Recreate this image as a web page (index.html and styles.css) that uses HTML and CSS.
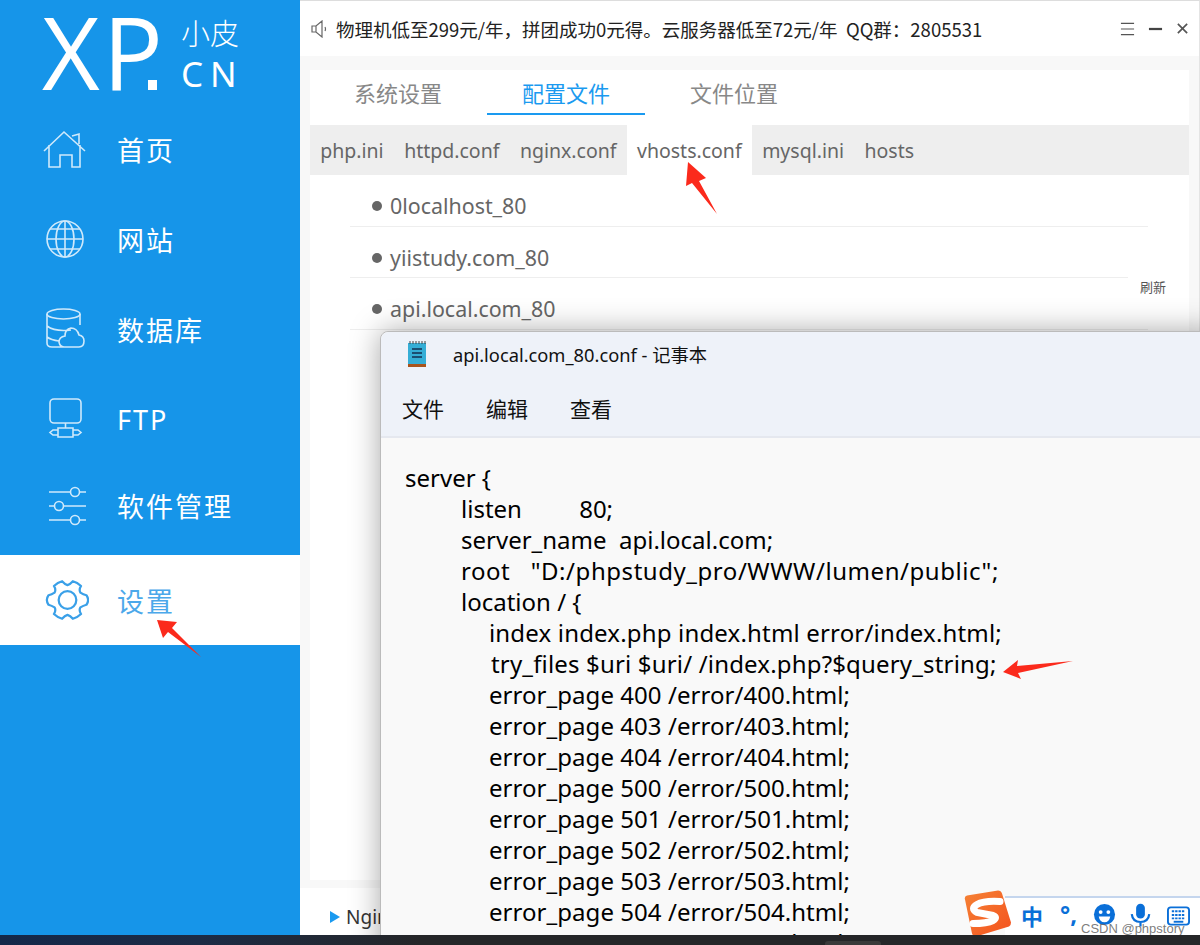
FILE: index.html
```html
<!DOCTYPE html>
<html lang="zh-CN">
<head>
<meta charset="utf-8">
<title>小皮面板</title>
<link rel="stylesheet" href="styles.css">
</head>
<body>
<div class="app">
  <aside class="sidebar">
    <div class="logo">
      <span class="logo-xp">XP<i class="logo-dot"></i></span>
      <span class="logo-sub"><span class="logo-cn">小皮</span><span class="logo-en">CN</span></span>
    </div>
    <nav class="nav">
      <a class="nav-item">
        <svg class="nav-icon" viewBox="0 0 46 46"><path d="M1 25 L21 6 L42 25 M29 10 L36 8 V18 M6 19 V41 H17 V29 H29 V41 H37 V19"/></svg>
        <span>首页</span>
      </a>
      <a class="nav-item">
        <svg class="nav-icon" viewBox="0 0 46 46"><circle cx="22" cy="23" r="18"/><ellipse cx="22" cy="23" rx="9" ry="18"/><path d="M22 5V41M4 23H40M7 13H37M7 33H37"/></svg>
        <span>网站</span>
      </a>
      <a class="nav-item">
        <svg class="nav-icon" viewBox="0 0 46 46"><ellipse cx="20.500" cy="8" rx="16.500" ry="5"/><path d="M4 8V37Q4 41 9 41H19M37 8V19M4 20Q12 26 28 24M4 31Q8 34 16 35M21 41H36Q41 41 41 35Q41 30 36 29Q34 22 28 22Q22 23 22 30Q16 31 16 36Q17 41 21 41Z"/></svg>
        <span>数据库</span>
      </a>
      <a class="nav-item">
        <svg class="nav-icon" viewBox="0 0 46 46"><rect x="7" y="3" width="31" height="24" rx="4"/><path d="M22.500 27V32M15 32H30V41H15ZM15 34H10L7 36.500L10 39H15M30 34H35L38 36.500L35 39H30"/></svg>
        <span>FTP</span>
      </a>
      <a class="nav-item is-raised">
        <svg class="nav-icon" viewBox="0 0 46 46"><circle cx="32" cy="10" r="4.500"/><circle cx="16" cy="24" r="4.500"/><circle cx="32" cy="38" r="4.500"/><path d="M6 10H27M37 10H43M6 24H11M21 24H43M6 38H27M37 38H43"/></svg>
        <span>软件管理</span>
      </a>
      <a class="nav-item is-active">
        <svg class="nav-icon" viewBox="-3.350 -1.750 49.500 49.500"><path d="M36.900 15Q40 17 43.400 17.900Q47 23 43.400 28.100Q40 29 36.900 31Q35 34 37.600 38.100Q33.500 42 28.800 43.200Q26 40 23 39Q20 40 17.200 43.200Q12.500 42 8.400 38.100Q11 34 9.100 31Q6 29 2.600 28.100Q-1 23 2.600 17.900Q6 17 9.100 15Q11 12 8.400 7.900Q12.500 4 17.200 2.800Q20 6 23 7Q26 6 28.800 2.800Q33.500 4 37.600 7.900Q35 12 36.900 15Z" stroke-linejoin="round"/><circle cx="23" cy="23" r="9.500"/></svg>
        <span>设置</span>
      </a>
    </nav>
  </aside>

  <main class="main">
    <header class="topbar">
      <svg class="speaker" viewBox="0 0 16 18"><path d="M1 6H5L11 1V17L5 12H1Z M5 6V12 M14 7Q15 9 14 11"/></svg>
      <span class="notice">物理机低至299元/年，拼团成功0元得。云服务器低至72元/年&nbsp;&nbsp;QQ群：2805531</span>
      <div class="window-buttons">
        <svg class="win-btn" viewBox="0 0 16 14"><path d="M1 1H15M1 7H15M1 13H15"/></svg>
        <svg class="win-btn win-min" viewBox="0 0 16 14"><path d="M1 7H15"/></svg>
        <svg class="win-btn win-close" viewBox="0 0 14 14"><path d="M2 2L12 12M12 2L2 12"/></svg>
      </div>
    </header>

    <section class="content">
      <div class="card">
        <div class="tabs">
          <span class="tab">系统设置</span>
          <span class="tab is-active">配置文件</span>
          <span class="tab">文件位置</span>
        </div>
        <div class="subtabs">
          <span class="subtab">php.ini</span>
          <span class="subtab">httpd.conf</span>
          <span class="subtab">nginx.conf</span>
          <span class="subtab is-active">vhosts.conf</span>
          <span class="subtab">mysql.ini</span>
          <span class="subtab">hosts</span>
        </div>
        <ul class="hosts">
          <li class="host">0localhost_80</li>
          <li class="host">yiistudy.com_80</li>
          <li class="host">api.local.com_80</li>
        </ul>
        <span class="refresh">刷新</span>
      </div>
    </section>

    <footer class="status">
      <span class="status-arrow"></span>
      <span class="status-text">Nginx</span>
    </footer>
  </main>

  <section class="notepad">
    <div class="np-title">
      <svg class="np-icon" viewBox="0 0 20 26">
        <rect x="1" y="2" width="18" height="21" fill="#35aed6"/>
        <rect x="1" y="23" width="18" height="3" fill="#a8541c"/>
        <path d="M3 0V3M6 0V3M9 0V3M12 0V3M15 0V3M18 0V3" stroke="#444" stroke-width="1"/>
        <path d="M5 8H15M5 12H15M5 16H15" stroke="#1b4f72" stroke-width="2"/>
      </svg>
      <span class="np-name">api.local.com_80.conf - 记事本</span>
    </div>
    <div class="np-menu">
      <span class="np-menu-item">文件</span>
      <span class="np-menu-item">编辑</span>
      <span class="np-menu-item">查看</span>
    </div>
    <div class="np-body">
      <div class="ln">server {</div>
      <div class="ln i1">listen <span class="tab-80">80;</span></div>
      <div class="ln i1">server_name&nbsp; api.local.com;</div>
      <div class="ln i1 ls-wide">root&nbsp;&nbsp; "D:/phpstudy_pro/WWW/lumen/public";</div>
      <div class="ln i1">location / {</div>
      <div class="ln i2 ls-slight">index index.php index.html error/index.html;</div>
      <div class="ln i3 ls-slight">try_files $uri $uri/ /index.php?$query_string;</div>
      <div class="ln err">error_page 400 /error/400.html;</div>
      <div class="ln err">error_page 403 /error/403.html;</div>
      <div class="ln err">error_page 404 /error/404.html;</div>
      <div class="ln err">error_page 500 /error/500.html;</div>
      <div class="ln err">error_page 501 /error/501.html;</div>
      <div class="ln err">error_page 502 /error/502.html;</div>
      <div class="ln err">error_page 503 /error/503.html;</div>
      <div class="ln err">error_page 504 /error/504.html;</div>
      <div class="ln err">error_page 505 /error/505.html;</div>
    </div>
  </section>

  <div class="ime">
    <svg class="ime-logo" viewBox="0 0 48 46">
      <defs><linearGradient id="sg" x1="0" y1="0" x2="1" y2="1"><stop offset="0" stop-color="#f58235"/><stop offset="1" stop-color="#f4511e"/></linearGradient></defs>
      <path d="M1 9Q0 6 3 5L34 0Q37 0 38 3L47 32Q47 35 45 36L12 46Q9 46 8 43Z" fill="url(#sg)"/>
      <path d="M36 11Q20 10 13 14Q6 18 13 22L29 25Q34 27 29 30Q23 33 9 33" fill="none" stroke="#fff" stroke-width="7" stroke-linecap="round"/>
    </svg>
    <span class="ime-zh">中</span>
    <span class="ime-punct">°,</span>
    <svg class="ime-face" viewBox="0 0 24 24"><circle cx="12" cy="12" r="11" fill="#0a6fd8"/><circle cx="8" cy="9.500" r="2" fill="#fff"/><circle cx="16" cy="9.500" r="2" fill="#fff"/><path d="M6 14H18Q17 20 12 20Q7 20 6 14Z" fill="#fff"/></svg>
    <svg class="ime-mic" viewBox="0 0 24 26"><rect x="7" y="0" width="10" height="17" rx="5" fill="#0a6fd8"/><path d="M2 12Q3 21 12 21Q21 21 22 12M12 21V26" fill="none" stroke="#0a6fd8" stroke-width="2.500"/></svg>
    <svg class="ime-kbd" viewBox="0 0 24 20"><rect x="1" y="1" width="22" height="18" rx="3" fill="none" stroke="#0a6fd8" stroke-width="2"/><path d="M5 5H19M5 9H19M5 12.500H19" stroke="#0a6fd8" stroke-width="2" stroke-dasharray="2.500 1"/><path d="M7 16H17" stroke="#0a6fd8" stroke-width="2"/></svg>
    <span class="watermark">CSDN @phpstory</span>
  </div>

  <svg class="annot" viewBox="0 0 1200 945">
    <polygon points="157,620 177,622 172,628 201,657 168,632 163,638"/>
    <polygon points="688,162 706,178 699,181 717,214 692,183 686,186"/>
    <polygon points="1003,672 1018,660 1017,666 1073,661 1018,673 1021,679"/>
  </svg>
</div>
<div class="taskbar"><span class="task-pill"></span></div>
</body>
</html>
```

FILE: styles.css
```css
* { box-sizing: border-box; }
html, body { margin: 0; padding: 0; }
body {
  width: 1200px;
  height: 945px;
  overflow: hidden;
  font-family: "Noto Sans", "Noto Sans CJK SC", sans-serif;
  background: #fff;
}
.app {
  position: relative;
  display: flex;
  width: 1200px;
  height: 935px;
  overflow: hidden;
}
.sidebar {
  flex: 0 0 300px;
  background: #1695e9;
  color: #fff;
}
.logo {
  height: 105px;
  display: flex;
  padding-left: 42px;
  gap: 14px;
}
.logo-xp {
  font: 400 100px/103px "Open Sans", sans-serif;
  height: 105px;
  position: relative;
  letter-spacing: 3px;
  width: 125px;
  white-space: nowrap;
}
.logo-dot {
  position: absolute;
  left: 106px;
  top: 80px;
  width: 9px;
  height: 10px;
  background: #fff;
}
.logo-sub {
  display: flex;
  flex-direction: column;
  padding-top: 15px;
  width: 70px;
}
.logo-cn { font-size: 29px; line-height: 38px; font-weight: 300; }
.logo-en { font: 400 35px/40px "Noto Sans", sans-serif; letter-spacing: 7px; margin-top: 1px; white-space: nowrap; }
.nav { display: flex; flex-direction: column; }
.nav-item {
  height: 90px;
  display: flex;
  align-items: center;
  gap: 28px;
  padding: 0 0 2px 43px;
  font-size: 27px;
  letter-spacing: 2px;
  font-weight: 400;
}
.nav-item.is-raised { padding-bottom: 10px; }
.nav-item.is-active { background: #fff; color: #4ba8ea; padding-bottom: 0; }
.nav-icon {
  width: 46px;
  height: 46px;
  flex: none;
  fill: none;
  stroke: #cfe9fb;
  stroke-width: 1.600;
}
.is-active .nav-icon { stroke: #3aa0e8; stroke-width: 2.400; }

.main {
  flex: 1;
  min-width: 0;
  display: flex;
  flex-direction: column;
  border-top: 1px solid #ddd;
  border-right: 1px solid #e4e4e4;
}
.topbar {
  height: 55px;
  flex: none;
  display: flex;
  align-items: center;
  padding-left: 11px;
  background: #fff;
}
.speaker {
  width: 16px;
  height: 18px;
  flex: none;
  fill: none;
  stroke: #666;
  stroke-width: 1.200;
}
.notice {
  margin-left: 9px;
  font-size: 18.500px;
  color: #222;
  font-family: "Noto Sans CJK SC", sans-serif;
}
.window-buttons {
  margin-left: auto;
  display: flex;
  align-items: center;
  gap: 13px;
  padding-right: 10px;
}
.win-btn {
  width: 15px;
  height: 14px;
  fill: none;
  stroke: #555;
  stroke-width: 1.200;
}
.win-min { stroke: #444; stroke-width: 2.400; }
.win-close { width: 13px; height: 13px; stroke-width: 1.800; }

.content {
  flex: 1;
  min-height: 0;
  background: #f8f8f8;
  padding: 14px 10px 8px 10px;
  display: flex;
}
.card {
  position: relative;
  flex: 1;
  background: #fff;
}
.tabs {
  height: 55px;
  display: flex;
  gap: 10px;
  padding-left: 9px;
}
.tab {
  width: 158px;
  height: 45px;
  line-height: 44px;
  text-align: center;
  font-size: 22px;
  color: #888;
  font-family: "Noto Sans CJK SC", sans-serif;
}
.tab.is-active {
  color: #1a9af0;
  border-bottom: 2px solid #1a9af0;
}
.subtabs {
  height: 50px;
  background: #eee;
  display: flex;
}
.subtab {
  padding: 0 10.250px;
  line-height: 52px;
  font-size: 19.500px;
  color: #666;
}
.subtab.is-active { background: #fff; }
.hosts {
  list-style: none;
  margin: 0;
  padding: 0 41px 0 40px;
}
.host {
  height: 51.500px;
  padding: 11px 0 0 40px;
  line-height: 40px;
  border-bottom: 1px solid #eee;
  font-size: 21.400px;
  color: #666;
  position: relative;
}
.host::before {
  content: "";
  position: absolute;
  left: 22px;
  top: 26px;
  width: 10px;
  height: 10px;
  border-radius: 50%;
  background: #666;
}
.refresh {
  position: absolute;
  right: 0;
  top: 200px;
  width: 61px;
  height: 34px;
  line-height: 34px;
  padding-left: 12px;
  background: #fff;
  font-size: 13px;
  color: #555;
}
.status {
  height: 47px;
  flex: none;
  background: #fff;
  display: flex;
  align-items: center;
  padding: 10px 0 0 30px;
  gap: 6px;
}
.status-arrow {
  width: 0;
  height: 0;
  border-left: 10px solid #1a9af0;
  border-top: 6px solid transparent;
  border-bottom: 6px solid transparent;
}
.status-text { font-size: 19px; color: #333; }

.notepad {
  position: absolute;
  left: 380px;
  top: 331px;
  width: 840px;
  height: 640px;
  background: #f9f9f9;
  border: 1px solid #bbb;
  border-radius: 8px 0 0 0;
  box-shadow: 0 0 30px rgba(0, 0, 0, .35);
  color: #000;
  font-family: "Noto Sans", "Noto Sans CJK SC", sans-serif;
}
.np-title {
  height: 47px;
  background: #eef2f9;
  display: flex;
  align-items: center;
  padding: 0 0 3px 26px;
  border-radius: 8px 0 0 0;
}
.np-icon { width: 20px; height: 26px; flex: none; }
.np-name {
  margin-left: 26px;
  font-size: 18.300px;
  color: #111;
  white-space: nowrap;
}
.np-menu {
  height: 59px;
  background: #eef2f9;
  border-bottom: 2px solid #e5e8ef;
  display: flex;
  padding-left: 21px;
  gap: 42px;
}
.np-menu-item { font-size: 21px; line-height: 60px; color: #111; }
.np-body {
  padding: 24px 0 0 24px;
  font-size: 24px;
}
.ln { height: 31px; line-height: 31px; white-space: nowrap; }
.i1 { margin-left: 56px; }
.i2 { margin-left: 84px; }
.i3 { margin-left: 86px; }
.err { margin-left: 84px; letter-spacing: .05px; }
.ls-wide { letter-spacing: .55px; }
.ls-slight { letter-spacing: .17px; }
.tab-80 { margin-left: 51px; }

.ime {
  position: absolute;
  left: 1005px;
  top: 896px;
  width: 195px;
  height: 39px;
  background: #fff;
  border-top: 2px solid #c5d6ee;
  display: flex;
  align-items: center;
}
.ime-logo {
  position: absolute;
  left: -41px;
  top: -8px;
  width: 48px;
  height: 47px;
}
.ime-zh {
  position: absolute;
  left: 16px;
  top: 2px;
  font: 700 22px/30px "Noto Sans CJK SC", sans-serif;
  color: #0a6fd8;
}
.ime-punct {
  position: absolute;
  left: 55px;
  top: 1px;
  font: 700 24px/30px "Noto Sans", sans-serif;
  color: #0a6fd8;
}
.ime-face { position: absolute; left: 88px; top: 5px; width: 23px; height: 23px; }
.ime-mic { position: absolute; left: 125px; top: 4px; width: 21px; height: 26px; }
.ime-kbd { position: absolute; left: 162px; top: 8px; width: 23px; height: 20px; }
.watermark {
  position: absolute;
  left: 76px;
  top: 23px;
  font: 13px/16px "Liberation Sans", sans-serif;
  color: rgba(90, 90, 90, .8);
  white-space: nowrap;
}
.annot {
  position: absolute;
  left: 0;
  top: 0;
  width: 1200px;
  height: 945px;
  fill: #fb2a1c;
  pointer-events: none;
}
.taskbar {
  position: relative;
  height: 10px;
  background: linear-gradient(90deg, #14284a 0, #1c2b45 200px, #252628 420px);
}
.task-pill {
  position: absolute;
  left: 825px;
  top: 6px;
  width: 56px;
  height: 4px;
  border-radius: 3px 3px 0 0;
  background: #3a3a3a;
}
```
